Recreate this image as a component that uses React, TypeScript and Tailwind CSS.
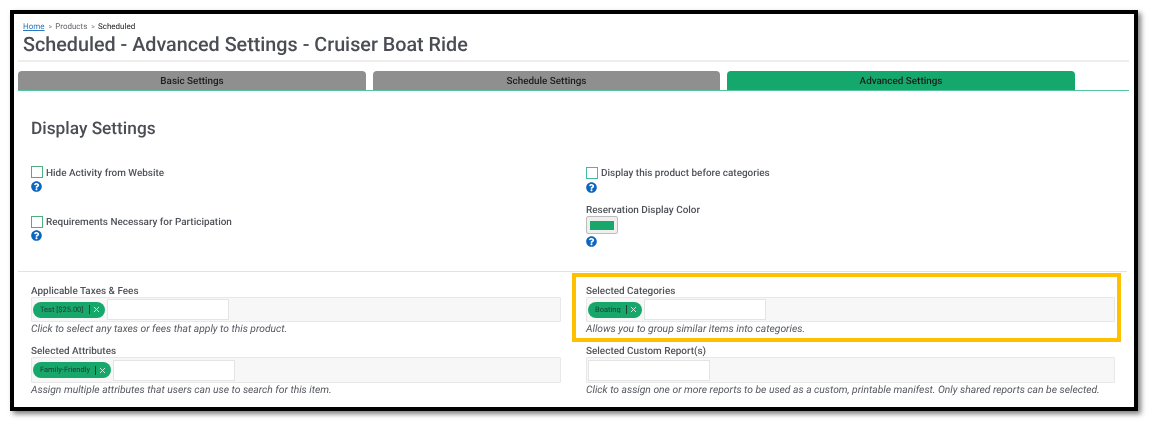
import { FaQuestionCircle } from 'react-icons/fa';
import { X } from 'lucide-react';

function Help() {
  return <FaQuestionCircle className="w-[11px] h-[11px] text-[#0b66c2]" />;
}

function Check({ label, teal, low }: { label: string; teal?: boolean; low?: boolean }) {
  return (
    <div className="flex items-center h-[12px]">
      <span className={`w-[12px] h-[12px] border-[1.5px] bg-white ${teal ? 'border-[#45b8a0]' : 'border-[#4fae7e]'}`} />
      <span className={`ml-[3px] text-[9.95px] font-medium text-[#4f5259] leading-none ${low ? 'pt-[4px]' : 'pt-[2px]'}`}>{label}</span>
    </div>
  );
}

function Chip({ label, width }: { label: string; width: string }) {
  return (
    <span className={`flex items-center h-[16px] rounded-full bg-[#17a76b] pl-[7px] text-[7.5px] text-[#1f3b30] ${width}`}>
      <span className="flex-1 truncate leading-none">{label}</span>
      <span className="w-px h-[9px] bg-[#1f3b30]" />
      <X className="w-[9px] h-[9px] ml-[2px] mr-[4px] text-[#d8f0e4]" strokeWidth={2.5} />
    </span>
  );
}

function Field({
  label,
  hint,
  chip,
  boxClass,
}: {
  label: string;
  hint: string;
  chip?: React.ReactNode;
  boxClass: string;
}) {
  return (
    <div>
      <div className="h-[14px] leading-[17px] text-[9.95px] font-medium text-[#4f5259]">{label}</div>
      <div className={`flex items-center gap-[2px] pl-[1px] bg-[#f7f7f7] border border-[#e8e8e8] rounded-[1px] ${boxClass}`}>
        {chip}
        <span className="w-[122px] h-[21px] bg-white border border-[#e4e4e4]" />
      </div>
      <div className="h-[13px] leading-[13px] text-[10.3px] italic text-[#55585e]">{hint}</div>
    </div>
  );
}

export default function App() {
  return (
    <div className="relative w-[1151px] h-[430px] bg-white font-['Roboto',sans-serif] overflow-hidden [text-rendering:geometricPrecision] blur-[0.3px]">
      <div className="absolute left-[10px] top-[10px] w-[1128px] h-[401px] border-4 border-black bg-white shadow-[3px_3px_5px_rgba(0,0,0,0.5)] pl-[4px] pr-[5px]">
        <div className="pl-[5px] pt-[8px]">
          <div className="flex items-center h-[10px] text-[8px] leading-none text-[#5f6268]">
            <span className="text-[#2a78c2] underline">Home</span>
            <span className="ml-[4px] mr-[3px] text-[7px]">&gt;</span>
            <span>Products</span>
            <span className="ml-[4px] mr-[3px] text-[7px]">&gt;</span>
            <span className="text-[#222]">Scheduled</span>
          </div>
          <h1 className="mt-[2px] h-[22px] leading-[22px] text-[19.75px] font-medium text-[#4a4d54]">
            Scheduled - Advanced Settings - Cruiser Boat Ride
          </h1>
        </div>
        <div className="mt-[4px] h-[2px] bg-[#eeeeee]" />

        <div className="mt-[9px] flex gap-[7px] border-b-[1.5px] border-[#55c49b] h-[20px]">
          <div className="w-[348px] h-[19px] pt-[3px] rounded-t-[4px] bg-[#8f8f8f] flex items-center justify-center text-[9.9px] font-medium text-[#1c1c1c]">
            Basic Settings
          </div>
          <div className="w-[347px] h-[19px] pt-[3px] rounded-t-[4px] bg-[#8f8f8f] flex items-center justify-center text-[9.9px] font-medium text-[#1c1c1c]">
            Schedule Settings
          </div>
          <div className="w-[348px] h-[19px] pt-[3px] rounded-t-[4px] bg-[#15a86c] flex items-center justify-center text-[9.9px] font-medium text-[#1c1c1c]">
            Advanced Settings
          </div>
        </div>

        <h2 className="mt-[27px] ml-[13px] h-[22px] leading-[22px] text-[17.3px] font-medium text-[#4a4d54]">Display Settings</h2>

        <div className="ml-[13px] h-[131px] grid grid-cols-[555px_1fr] pt-[26px]">
          <div>
            <Check label="Hide Activity from Website" low />
            <div className="mt-[3px] h-[11px]"><Help /></div>
            <div className="mt-[24px]"><Check label="Requirements Necessary for Participation" /></div>
            <div className="mt-[2px] h-[11px]"><Help /></div>
          </div>
          <div className="pt-[1px]">
            <Check label="Display this product before categories" teal />
            <div className="mt-[3px] h-[11px]"><Help /></div>
            <div className="mt-[9px] h-[14px] leading-[17px] text-[9.95px] font-medium text-[#4f5259]">Reservation Display Color</div>
            <div className="w-[32px] h-[18px] border border-[#bdbdbd] bg-[#efefef] rounded-[2px] flex items-center justify-center">
              <span className="w-[24px] h-[9px] bg-[#17a76b]" />
            </div>
            <div className="mt-[2px] h-[11px]"><Help /></div>
          </div>
        </div>

        <div className="h-[1px] w-[1109px] bg-[#e2e2e2]" />

        <div className="ml-[13px] mt-[11px] grid grid-cols-[555px_1fr] gap-y-[8px]">
          <Field
            label="Applicable Taxes & Fees"
            hint="Click to select any taxes or fees that apply to this product."
            boxClass="w-[530px] h-[25px]"
            chip={<Chip label="Test [$25.00]" width="w-[72px]" />}
          />
          <Field
            label="Selected Categories"
            hint="Allows you to group similar items into categories."
            boxClass="w-[529px] h-[25px]"
            chip={<Chip label="Boating" width="w-[54px]" />}
          />
          <Field
            label="Selected Attributes"
            hint="Assign multiple attributes that users can use to search for this item."
            boxClass="w-[530px] h-[26px]"
            chip={<Chip label="Family-Friendly" width="w-[78px]" />}
          />
          <Field
            label="Selected Custom Report(s)"
            hint="Click to assign one or more reports to be used as a custom, printable manifest. Only shared reports can be selected."
            boxClass="w-[529px] h-[26px]"
          />
        </div>
      </div>

      {/* callout drawn over the screenshot */}
      <div className="absolute left-[572px] top-[273px] w-[549px] h-[69px] border-4 border-[#ffc000]" />
    </div>
  );
}
